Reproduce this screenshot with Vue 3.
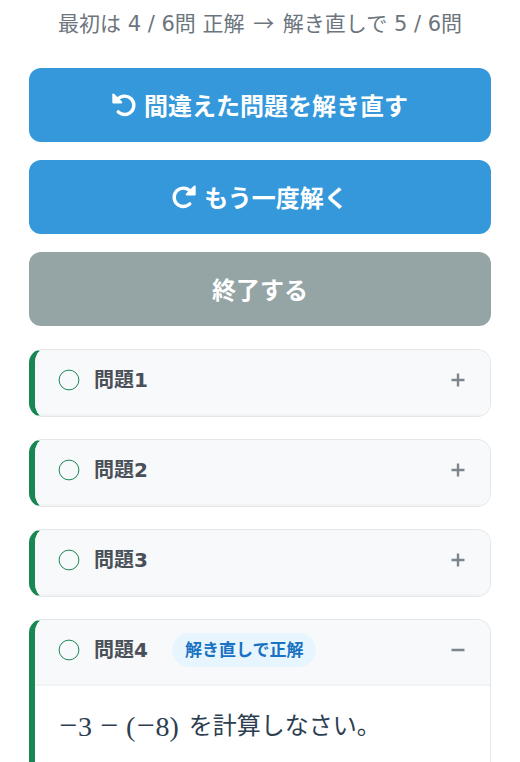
<template>
  <main class="result">
    <p class="summary">最初は 4 / 6問 正解 <span class="arrow">→</span> 解き直しで 5 / 6問</p>

    <div class="actions">
      <button type="button" class="action">
        <svg class="action-icon" viewBox="0 0 24 24" fill="none" stroke="currentColor" stroke-width="3.4" stroke-linecap="round">
          <path d="M5.8 6.2A9.2 9.2 0 1 1 6.2 18.9" />
          <path d="M0.3 1.4Q0.3 0.6 1.3 0.6Q1.9 0.6 2.4 1.1L9.9 8.6Q10.4 9.2 10.2 9.8Q9.9 10.5 9.2 10.5H1.4Q0.3 10.5 0.3 9.4z" fill="currentColor" stroke="none" />
        </svg>
        <span>間違えた問題を解き直す</span>
      </button>
      <button type="button" class="action">
        <svg class="action-icon" viewBox="0 0 24 24" fill="none" stroke="currentColor" stroke-width="3.4" stroke-linecap="round">
          <path d="M18.2 6.2A9.2 9.2 0 1 0 17.8 18.9" />
          <path d="M23.7 1.4Q23.7 0.6 22.7 0.6Q22.1 0.6 21.6 1.1L14.1 8.6Q13.6 9.2 13.8 9.8Q14.1 10.5 14.8 10.5H22.6Q23.7 10.5 23.7 9.4z" fill="currentColor" stroke="none" />
        </svg>
        <span>もう一度解く</span>
      </button>
      <button type="button" class="action quit">
        <span>終了する</span>
      </button>
    </div>

    <section class="questions">
      <article v-for="q in questions" :key="q.id" class="question">
        <button type="button" class="question-head" :aria-expanded="openId === q.id" @click="toggle(q.id)">
          <svg class="mark" viewBox="0 0 22 22" fill="none" stroke="currentColor" stroke-width="1">
            <circle cx="11" cy="11" r="9.9" />
          </svg>
          <span class="question-name">問題{{ q.id }}</span>
          <span v-if="q.retried" class="badge">解き直しで正解</span>
          <svg class="toggle" viewBox="0 0 14 14" stroke="currentColor" stroke-width="2.4">
            <path d="M0.5 7h13" />
            <path v-if="openId !== q.id" d="M7 0.5v13" />
          </svg>
        </button>
        <div v-if="openId === q.id" class="question-body">
          <span class="math"><span class="minus">−</span>3<span class="minus binary">−</span>(<span class="minus">−</span>8)</span>
          <span>を計算しなさい。</span>
        </div>
      </article>
    </section>
  </main>
</template>

<script setup>
import { ref } from 'vue'

const questions = [
  { id: 1, retried: false },
  { id: 2, retried: false },
  { id: 3, retried: false },
  { id: 4, retried: true },
]

const openId = ref(4)

function toggle(id) {
  openId.value = openId.value === id ? null : id
}
</script>

<style>
body {
  margin: 0;
  background: #fff;
}
/* スクロールバーは表示しない */
html {
  scrollbar-width: none;
}
</style>

<style scoped>
.result {
  padding: 7px 29px 0;
  font-family: "DejaVu Sans", "Noto Sans CJK JP", sans-serif;
  color: #2c3e50;
}

.summary {
  margin: 0 0 29px;
  font-size: 21px;
  line-height: 30px;
  text-align: center;
  white-space: nowrap;
  color: #6c757d;
}
.arrow {
  padding: 0 2px;
  font-family: "Noto Sans CJK JP", sans-serif;
}

.actions {
  display: flex;
  flex-direction: column;
  gap: 18px;
}

.action {
  display: flex;
  align-items: center;
  justify-content: center;
  gap: 8px;
  width: 100%;
  padding: 19px 16px;
  border: 0;
  border-radius: 12px;
  background: #3498db;
  color: #fff;
  font-family: "Noto Sans CJK JP", sans-serif;
  font-size: 24px;
  font-weight: 700;
  line-height: 36px;
  cursor: pointer;
}
.action.quit {
  background: #95a5a6;
}

.action-icon {
  width: 24px;
  height: 24px;
}

.questions {
  display: flex;
  flex-direction: column;
  gap: 22px;
  margin-top: 23px;
}

.question {
  border: 1px solid #e3e7ea;
  border-left: 6px solid #198754;
  border-radius: 14px;
  overflow: hidden;
}

.question-head {
  display: flex;
  align-items: center;
  width: 100%;
  padding: 13px 25px 17px 23px;
  border: 0;
  border-bottom: 2px solid #f1f3f5;
  background: #f8f9fb;
  color: #495057;
  font: inherit;
  font-size: 20px;
  font-weight: 700;
  line-height: 34px;
  cursor: pointer;
}

.mark {
  width: 22px;
  height: 22px;
  margin-right: 14px;
  color: #198754;
}

.badge {
  margin-left: 24px;
  padding: 0 13px;
  border-radius: 17px;
  background: #e7f5ff;
  color: #1971c2;
  font-size: 17px;
}

.toggle {
  width: 14px;
  height: 14px;
  margin-left: auto;
  color: #7d858d;
}

.question-body {
  display: flex;
  align-items: center;
  gap: 10px;
  padding: 21px 23px 40px;
  font-size: 24px;
  line-height: 36px;
  white-space: nowrap;
}

.math {
  font-family: "Liberation Serif", serif;
  font-size: 28px;
}
.minus {
  padding: 0 1px;
  font-size: 32px;
}
.minus.binary {
  padding: 0 8px;
}
</style>
